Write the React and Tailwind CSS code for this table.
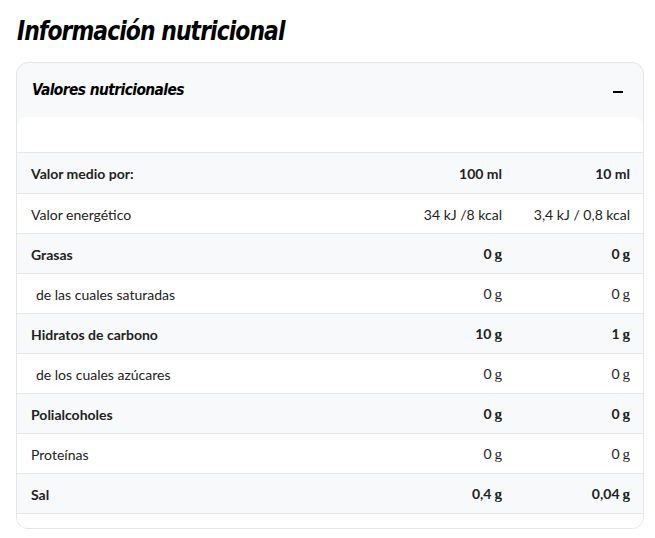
const rows = [
    { label: 'Valor medio por:', a: '100 ml', b: '10 ml', bold: true, unit: false },
    { label: 'Valor energético', a: '34 kJ /8 kcal', b: '3,4 kJ / 0,8 kcal', unit: false },
    { label: 'Grasas', a: '0', b: '0', bold: true, unit: true },
    { label: 'de las cuales saturadas', a: '0', b: '0', sub: true, unit: true },
    { label: 'Hidratos de carbono', a: '10', b: '1', bold: true, unit: true },
    { label: 'de los cuales azúcares', a: '0', b: '0', sub: true, unit: true },
    { label: 'Polialcoholes', a: '0', b: '0', bold: true, unit: true },
    { label: 'Proteínas', a: '0', b: '0', unit: true },
    { label: 'Sal', a: '0,4', b: '0,04', bold: true, unit: true },
];

function Value({ v, unit }) {
    if (!unit) return v;
    return (
        <>
            {v}
            <span className="ml-[3px] font-['Liberation_Serif',serif] text-[15px]">g</span>
        </>
    );
}

export default function App() {
    const heading = "font-['DejaVu_Sans',sans-serif] font-bold italic [font-stretch:condensed] origin-left";

    return (
        <div className="bg-white w-[655px] h-[538px] pl-[16px] pr-[11px] pt-[14px] font-['Lato',sans-serif] text-[#222]">
            <h2 className={`${heading} text-[27px] leading-[34px] tracking-[-1px] scale-x-[0.9] text-black pl-[1px]`}>
                Información nutricional
            </h2>

            {/* Accordion card */}
            <div className="mt-[14px] border border-[#e4e6e9] rounded-[12px] bg-[#f8f9fa] overflow-hidden">
                <div className="h-[54px] flex items-center justify-between pl-[15px] pr-[20px]">
                    <span className={`${heading} inline-block text-[16px] tracking-[-0.6px] scale-x-[0.96] text-black`}>Valores nutricionales</span>
                    <span className="w-[10px] h-[2px] bg-black mt-[4px]" />
                </div>

                <div className="bg-white rounded-t-[10px] h-[36px] border-b border-[#e6e7e9]" />

                <table className="w-full border-collapse text-[14px]">
                    <tbody>
                        {rows.map((r) => (
                            <tr key={r.label} className={`h-[40px] border-b border-[#e6e7e9] ${r.bold ? 'bg-[#f8f9fa] font-bold' : 'bg-white'}`}>
                                <td className={`${r.sub ? 'pl-[19px]' : 'pl-[14px]'} pt-[2px] align-middle`}>{r.label}</td>
                                <td className="text-right w-[200px] pr-[13px] pt-[2px] align-middle"><Value v={r.a} unit={r.unit} /></td>
                                <td className="text-right w-[128px] pr-[13px] pt-[2px] align-middle"><Value v={r.b} unit={r.unit} /></td>
                            </tr>
                        ))}
                    </tbody>
                </table>

                <div className="bg-white h-[14px]" />
            </div>
        </div>
    );
}
